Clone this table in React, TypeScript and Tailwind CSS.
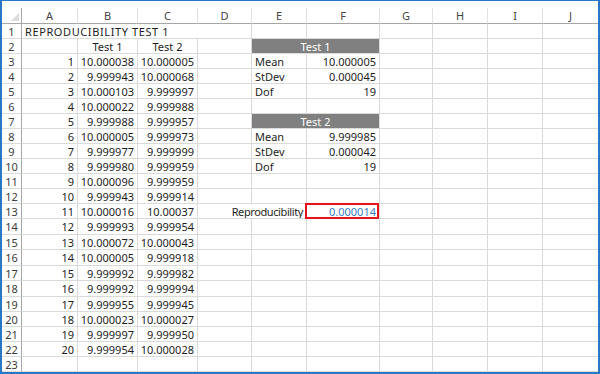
import React from "react";

const cols = ["A", "B", "C", "D", "E", "F", "G", "H", "I", "J"];

const data: [string, string][] = [
  ["10.000038", "10.000005"],
  ["9.999943", "10.000068"],
  ["10.000103", "9.999997"],
  ["10.000022", "9.999988"],
  ["9.999988", "9.999957"],
  ["10.000005", "9.999973"],
  ["9.999977", "9.999999"],
  ["9.999980", "9.999959"],
  ["10.000096", "9.999959"],
  ["9.999943", "9.999914"],
  ["10.000016", "10.00037"],
  ["9.999993", "9.999954"],
  ["10.000072", "10.000043"],
  ["10.000005", "9.999918"],
  ["9.999992", "9.999982"],
  ["9.999992", "9.999994"],
  ["9.999955", "9.999945"],
  ["10.000023", "10.000027"],
  ["9.999997", "9.999950"],
  ["9.999954", "10.000028"],
];

// stats tables, keyed by row number
const stats: Record<number, [string, string]> = {
  3: ["Mean", "10.000005"],
  4: ["StDev", "0.000045"],
  5: ["Dof", "19"],
  8: ["Mean", "9.999985"],
  9: ["StDev", "0.000042"],
  10: ["Dof", "19"],
};

const cell = "border-r border-b border-[#dadada] px-[3px] whitespace-nowrap overflow-hidden flex items-center";

function Row({ r }: { r: number }) {
  const d = r >= 3 && r <= 22 ? data[r - 3] : null;
  const s = stats[r];
  const bar = r === 2 ? "Test 1" : r === 7 ? "Test 2" : null;

  return (
    <>
      <div className="border-r border-b border-r-[#a6a6a6] border-b-[#dadada] flex items-center justify-center text-[#3c3c3c]">
        {r}
      </div>
      {r === 1 ? (
        <div className={`${cell} col-span-3 border-r-0 tracking-[0.6px]`}>REPRODUCIBILITY TEST 1</div>
      ) : (
        <>
          <div className={`${cell} justify-end`}>{d ? r - 2 : ""}</div>
          <div className={`${cell} ${r === 2 ? "justify-center" : "justify-end"}`}>
            {r === 2 ? "Test 1" : d ? d[0] : ""}
          </div>
          <div className={`${cell} ${r === 2 ? "justify-center" : "justify-end"}`}>
            {r === 2 ? "Test 2" : d ? d[1] : ""}
          </div>
        </>
      )}
      {r === 13 ? (
        <>
          <div className={`${cell} col-span-2 justify-end tracking-[-0.4px]`}>Reproducibility</div>
          <div className={`${cell} justify-end relative overflow-visible text-[#3a7dc4]`}>
            0.000014
            <div className="absolute -left-[2px] -top-[1px] right-0 bottom-[-1px] border-2 border-[#e8111a]" />
          </div>
        </>
      ) : (
        <>
          <div className={cell} />
          {bar ? (
            <div className={`${cell} col-span-2 justify-center bg-[#808080] text-white border-[#808080]`}>{bar}</div>
          ) : (
            <>
              <div className={cell}>{s ? s[0] : ""}</div>
              <div className={`${cell} justify-end`}>{s ? s[1] : ""}</div>
            </>
          )}
        </>
      )}
      <div className={cell} />
      <div className={cell} />
      <div className={cell} />
      <div className={`${cell} border-r-0`} />
    </>
  );
}

export default function App() {
  const rows = Array.from({ length: 23 }, (_, i) => i + 1);
  return (
    <div className="w-[600px] h-[374px] bg-white border-t border-l-2 border-r-2 border-b-2 border-[#2a78c4] overflow-hidden pt-[7px] text-[11px] leading-none text-[#1e1e1e] font-['Noto_Sans',sans-serif]">
      <div className="grid grid-cols-[20px_56px_60px_60px_54px_55px_73px_53px_55px_55px_55px] grid-rows-[16px_repeat(13,15px)_16px_15px_16px_15px_16px_repeat(4,15px)_15px]">
        <div className="border-r border-b border-[#a6a6a6] relative">
          <svg className="absolute right-[2px] bottom-[2px]" width="8" height="8" viewBox="0 0 8 8">
            <polygon points="8,0 8,8 0,8" fill="#dcdcdc" />
          </svg>
        </div>
        {cols.map((c, i) => (
          <div
            key={c}
            className={`border-b border-b-[#a6a6a6] ${i < 9 ? "border-r border-r-[#e1e1e1]" : ""} flex items-center justify-center text-[#444]`}
          >
            {c}
          </div>
        ))}
        {rows.map((r) => (
          <Row key={r} r={r} />
        ))}
      </div>
    </div>
  );
}
